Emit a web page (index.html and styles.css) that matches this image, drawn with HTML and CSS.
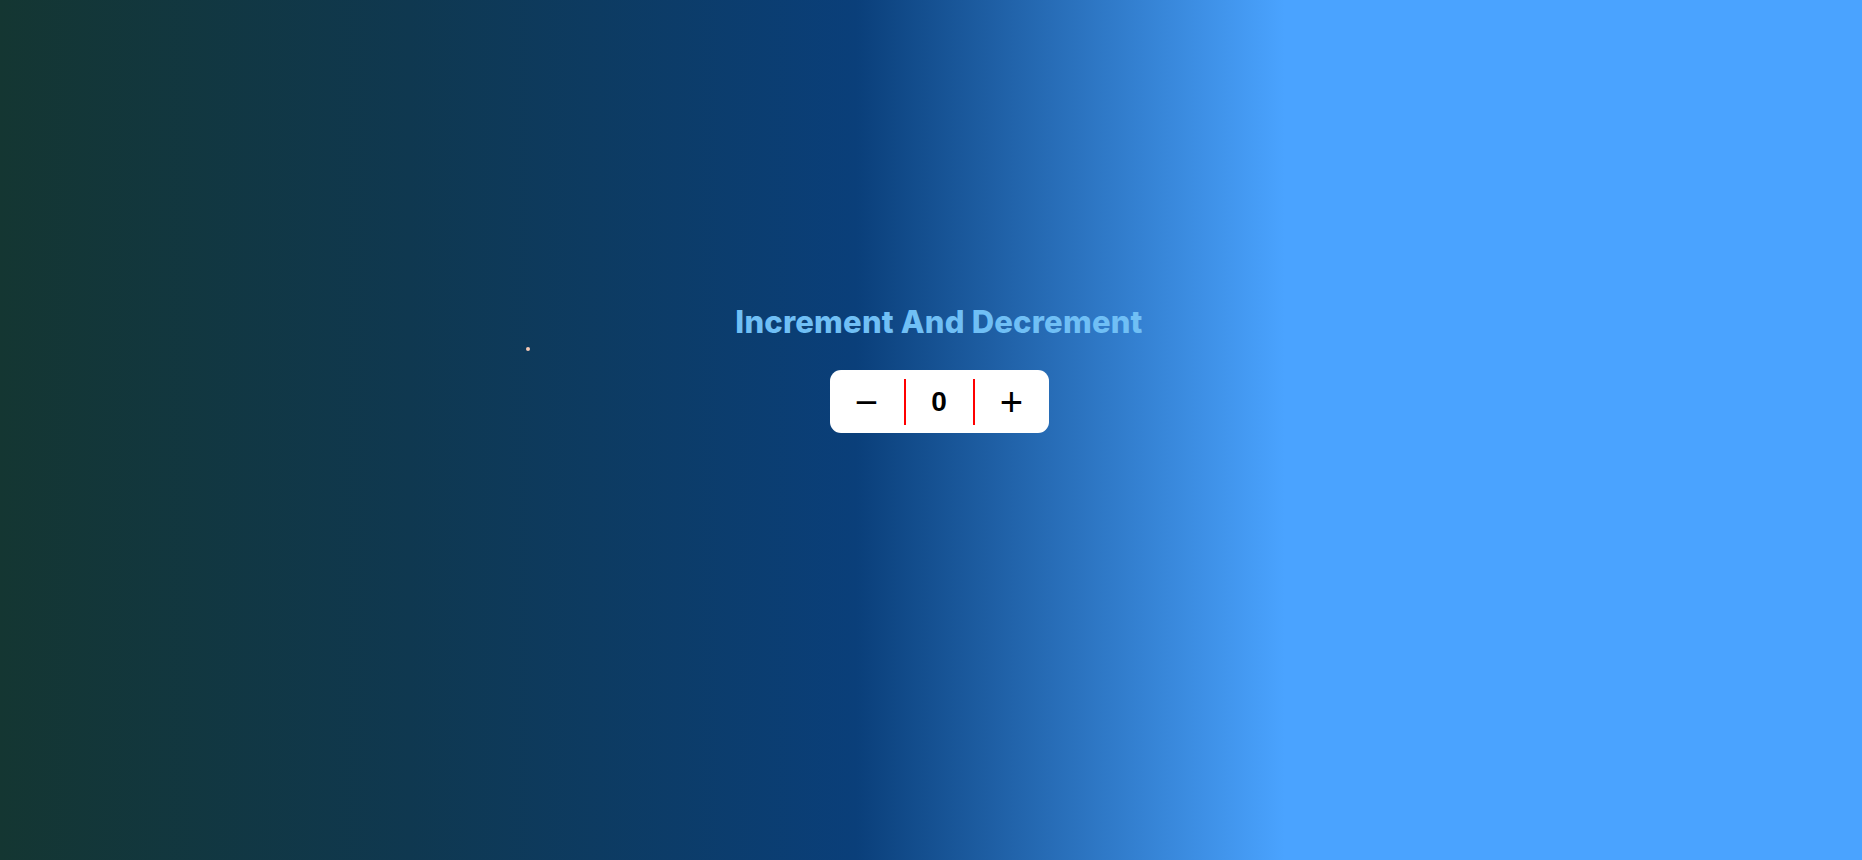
FILE: index.html
```html
<!DOCTYPE html>
<html lang="en">
<head>
<meta charset="utf-8">
<title>Increment And Decrement</title>
<link rel="stylesheet" href="styles.css">
</head>
<body>
<main class="page">
  <span class="dot"></span>
  <h1 class="title">Increment And Decrement</h1>
  <div class="counter">
    <button class="btn" type="button">−</button>
    <span class="value">0</span>
    <button class="btn" type="button">+</button>
  </div>
</main>
</body>
</html>
```
FILE: styles.css
```css
* { box-sizing: border-box; }
html, body { margin: 0; padding: 0; }
body {
  width: 100%;
  height: 100vh;
  background: linear-gradient(90deg, #143632 0%, #0f3850 22%, #0a3f7a 46%, #4aa3ff 69%, #4aa3ff 100%);
  font-family: "Liberation Sans", Arial, sans-serif;
  overflow: hidden;
}
.page {
  position: relative;
  height: 100%;
  display: flex;
  flex-direction: column;
  align-items: center;
  padding-top: 302px;
  padding-left: 16px;
}
.dot {
  position: absolute;
  left: 526px;
  top: 347px;
  width: 4px;
  height: 4px;
  border-radius: 50%;
  background: #f6c9b5;
}
.title {
  margin: 0;
  font-family: Inter, "Open Sans", sans-serif;
  font-weight: 800;
  font-size: 31px;
  line-height: 40px;
  color: #70bff5;
  letter-spacing: 0.2px;
}
.counter {
  margin-top: 28px;
  display: flex;
  align-items: center;
  width: 219px;
  height: 63px;
  background: #fff;
  border-radius: 11px;
}
.btn {
  flex: 1;
  border: 0;
  background: transparent;
  padding: 0;
  font-family: "Liberation Sans", Arial, sans-serif;
  font-size: 40px;
  line-height: 46px;
  color: #000;
  cursor: pointer;
}
.value {
  width: 71px;
  height: 46px;
  border-left: 2px solid #ff0000;
  border-right: 2px solid #ff0000;
  text-align: center;
  font-size: 28px;
  font-weight: 700;
  line-height: 46px;
  color: #000;
}
```
